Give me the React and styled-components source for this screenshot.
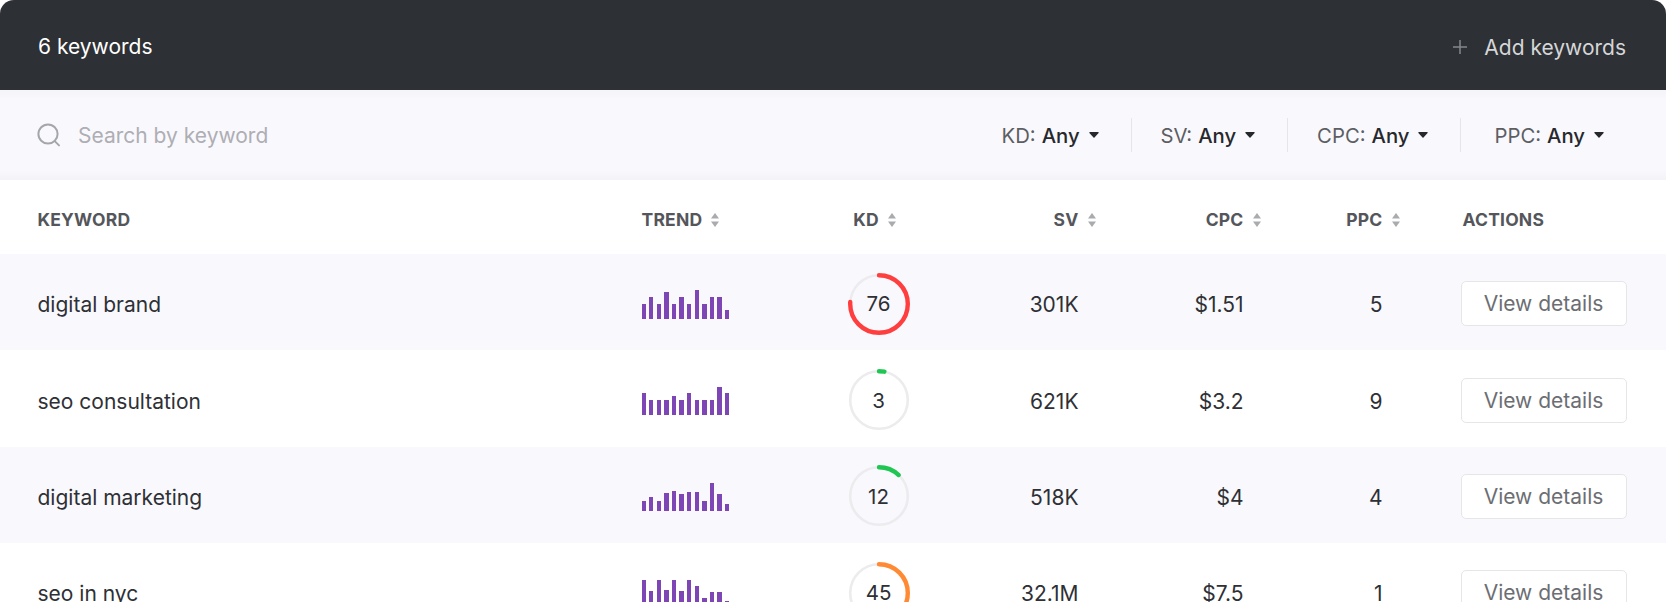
import React from "react";
import styled, { createGlobalStyle } from "styled-components";

const Global = createGlobalStyle`
  html, body { margin: 0; padding: 0; background: #fff; }
  body { font-family: Inter, "Liberation Sans", sans-serif; -webkit-font-smoothing: antialiased; }
`;

const Page = styled.div`
  width: 1666px;
  height: 602px;
  overflow: hidden;
  background: #fff;
`;
const TopBar = styled.header`
  height: 90px;
  box-sizing: border-box;
  padding: 2px 40px 0 38px;
  background: #2d3035;
  border-radius: 14px 14px 0 0;
  display: flex;
  align-items: center;
  justify-content: space-between;
`;
const Count = styled.span`
  color: #fff;
  font-size: 21px;
`;
const AddButton = styled.button`
  display: flex;
  align-items: center;
  gap: 17px;
  padding: 2px 0 0;
  border: 0;
  background: none;
  color: #d5d6d7;
  font: 400 21px Inter, sans-serif;
`;
const FilterBar = styled.div`
  height: 90px;
  box-sizing: border-box;
  padding: 0 62px 0 36px;
  display: flex;
  align-items: center;
  justify-content: space-between;
  background: linear-gradient(#f5f5f9 0, #f9f9fd 10px, #f9f9fd calc(100% - 10px), #f4f4f8 100%);
`;
const Search = styled.div`
  display: flex;
  align-items: center;
  gap: 16px;
  color: #aeaeb4;
  font-size: 21px;
`;
const Filters = styled.div`
  display: flex;
  align-items: center;
`;
const Filter = styled.div`
  display: flex;
  align-items: center;
  height: 34px;
  font-size: 20.3px;
  color: #5c5e63;
  padding: 0 32px 0 29px;
  border-left: ${(p) => (p.$first ? "0" : "1px solid #e6e6ea")};
  &:last-child { padding-right: 0; padding-left: 33px; }
  b { font-weight: 500; color: #26282c; margin-left: 6px; }
  svg { margin-left: 9px; }
`;
const Row = styled.div`
  display: grid;
  grid-template-columns: 604px 177px 120px 140px 165px 139px 1fr;
  align-items: center;
  box-sizing: border-box;
  padding: ${(p) => p.$top}px 0 0 37.5px;
  height: ${(p) => p.$h}px;
  background: ${(p) => (p.$shade ? "#f9f9fd" : "#fff")};
`;
const Head = styled.div`
  display: flex;
  align-items: center;
  gap: 8px;
  font-size: 17.5px;
  font-weight: 700;
  color: #54565b;
  letter-spacing: 0.2px;
  justify-content: ${(p) => p.$align || "flex-start"};
  svg { flex: none; margin-right: ${(p) => (p.$align === "flex-end" ? "-18px" : "0")}; }
`;
const KdHead = styled(Head)`
  padding-right: 7px;
`;
const ActionsHead = styled(Head)`
  padding-left: 80px;
`;
const Cell = styled.div`
  font-size: 21px;
  color: #2e3035;
  padding-top: 2px;
  text-align: ${(p) => p.$align || "left"};
`;
const Bars = styled.div`
  display: flex;
  align-items: flex-end;
  gap: 3.3px;
  height: 30px;
`;
const Bar = styled.i`
  display: block;
  width: 4.3px;
  background: #7d46b4;
`;
const GaugeCell = styled.div`
  position: relative;
  width: 62px;
  height: 62px;
  justify-self: center;
  display: flex;
  align-items: center;
  justify-content: center;
  font-size: 20.5px;
  color: #2e3035;
  svg { position: absolute; inset: 0; }
`;
const ActionCell = styled.div`
  padding-left: 78px;
`;
const DetailsButton = styled.button`
  width: 166px;
  height: 45px;
  box-sizing: border-box;
  background: #fff;
  border: 1px solid #e6e6ea;
  border-radius: 5px;
  color: #6c6e73;
  font: 400 21px Inter, sans-serif;
`;

const SortIcon = () => (
  <svg width="10" height="16" viewBox="0 0 10 16" fill="#a9abae">
    <path d="M5 1 9 6.4H1z" />
    <path d="M5 15 1 9.6h8z" />
  </svg>
);
const Caret = () => (
  <svg width="10" height="6" viewBox="0 0 10 6" fill="#26282c">
    <path d="M.8 0h8.4a.6.6 0 0 1 .4 1L5.5 5.6a.7.7 0 0 1-1 0L.4 1A.6.6 0 0 1 .8 0z" />
  </svg>
);

const Gauge = ({ value, color }) => {
  const r = 28.8;
  const c = 2 * Math.PI * r;
  return (
    <GaugeCell>
      <svg width="62" height="62" viewBox="0 0 62 62" fill="none" strokeWidth="2.6">
        <circle cx="31" cy="31" r={r} stroke="#ececee" />
        <circle
          cx="31"
          cy="31"
          r={r}
          stroke={color}
          strokeWidth="4.4"
          strokeLinecap="round"
          strokeDasharray={`${(c * value) / 100} ${c}`}
          transform="rotate(-90 31 31)"
        />
      </svg>
      {value}
    </GaugeCell>
  );
};

const rows = [
  { k: "digital brand", bars: [15,22,15,27,15,22,15,29,15,22,22,9], kd: 76, color: "#ff3f3f", sv: "301K", cpc: "$1.51", ppc: 5 },
  { k: "seo consultation", bars: [22,15,15,15,19,15,22,15,15,15,28,22], kd: 3, color: "#1fc652", sv: "621K", cpc: "$3.2", ppc: 9 },
  { k: "digital marketing", bars: [10,14,10,18,20,17,19,19,10,28,17,7], kd: 12, color: "#1fc652", sv: "518K", cpc: "$4", ppc: 4 },
  { k: "seo in nyc", bars: [28,17,28,18,28,17,28,22,10,16,16,7], kd: 45, color: "#ff8a33", sv: "32.1M", cpc: "$7.5", ppc: 1 },
];

export default function App() {
  return (
    <Page>
      <Global />
      <TopBar>
        <Count>6 keywords</Count>
        <AddButton>
          <svg width="14" height="14" viewBox="0 0 14 14" stroke="#85878a" strokeWidth="1.5">
            <path d="M7 0v14M0 7h14" />
          </svg>
          Add keywords
        </AddButton>
      </TopBar>
      <FilterBar>
        <Search>
          <svg width="26" height="26" viewBox="0 0 26 26" fill="none" stroke="#a5a6ab" strokeWidth="2">
            <circle cx="12" cy="12" r="9.6" />
            <path d="M19 19.4l4 4" strokeLinecap="round" />
          </svg>
          Search by keyword
        </Search>
        <Filters>
          <Filter $first>KD: <b>Any</b><Caret /></Filter>
          <Filter>SV: <b>Any</b><Caret /></Filter>
          <Filter>CPC: <b>Any</b><Caret /></Filter>
          <Filter>PPC: <b>Any</b><Caret /></Filter>
        </Filters>
      </FilterBar>
      <Row $h={74} $top={5}>
        <Head>KEYWORD</Head>
        <Head>TREND<SortIcon /></Head>
        <KdHead $align="center">KD<SortIcon /></KdHead>
        <Head $align="flex-end">SV<SortIcon /></Head>
        <Head $align="flex-end">CPC<SortIcon /></Head>
        <Head $align="flex-end">PPC<SortIcon /></Head>
        <ActionsHead>ACTIONS</ActionsHead>
      </Row>
      {rows.map((r, i) => (
        <Row key={r.k} $h={96.4} $top={3} $shade={i % 2 === 0}>
          <Cell>{r.k}</Cell>
          <Bars>
            {r.bars.map((h, j) => (
              <Bar key={j} style={{ height: h }} />
            ))}
          </Bars>
          <Gauge value={r.kd} color={r.color} />
          <Cell $align="right">{r.sv}</Cell>
          <Cell $align="right">{r.cpc}</Cell>
          <Cell $align="right">{r.ppc}</Cell>
          <ActionCell><DetailsButton>View details</DetailsButton></ActionCell>
        </Row>
      ))}
    </Page>
  );
}
